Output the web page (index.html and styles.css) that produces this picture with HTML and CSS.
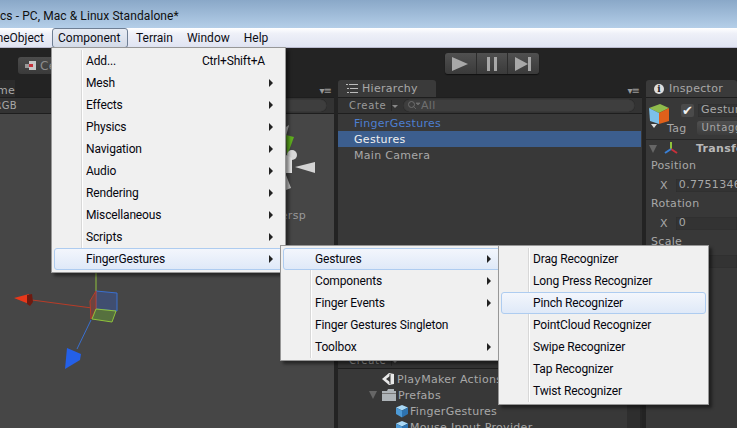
FILE: index.html

```html
<!DOCTYPE html>
<html lang="en">
<head>
  <meta charset="UTF-8" />
  <title>Unity - PC, Mac &amp; Linux Standalone</title>
  <link rel="stylesheet" href="styles.css">
</head>
<body>
  <svg class="defs" width="0" height="0">
    <symbol id="cube" viewBox="0 0 14 14">
      <polygon points="7,1 13,3.5 7,6.5 1,3.5" fill="#a9d8f5"/>
      <polygon points="1,3.5 7,6.5 7,13.5 1,10" fill="#4d9ad6"/>
      <polygon points="13,3.5 7,6.5 7,13.5 13,10" fill="#2d73b0"/>
    </symbol>
  </svg>

  <div class="titlebar">cs - PC, Mac &amp; Linux Standalone*</div>

  <div class="menubar">
    <div class="menu-clip"><span class="menubar-item">GameObject</span></div>
    <span class="menubar-item active">Component</span>
    <span class="menubar-item">Terrain</span>
    <span class="menubar-item">Window</span>
    <span class="menubar-item">Help</span>
  </div>

  <div class="editor">
    <div class="toolbar">
      <div class="pivot-btn">
        <svg width="12" height="10" viewBox="0 0 12 10"><rect x="0" y="3" width="4" height="4" fill="#999"/><rect x="4" y="0" width="7" height="9" fill="#c8c8c8"/><rect x="4" y="3" width="4" height="3" fill="#c8303a"/></svg>
        <span>Center</span>
      </div>
      <div class="play-group">
        <div class="play-btn"><svg width="18" height="16" viewBox="0 0 18 16"><polygon points="1,1 17,8 1,15" fill="#a8a8a8"/></svg></div>
        <div class="play-btn"><svg width="12" height="14" viewBox="0 0 12 14"><rect x="1" y="0" width="3" height="14" fill="#a8a8a8"/><rect x="8" y="0" width="3" height="14" fill="#a8a8a8"/></svg></div>
        <div class="play-btn"><svg width="18" height="16" viewBox="0 0 18 16"><polygon points="0,1 13,8 0,15" fill="#a8a8a8"/><rect x="13" y="1" width="3" height="14" fill="#a8a8a8"/></svg></div>
      </div>
    </div>

    <div class="panels">
      <div class="scene-panel">
        <div class="tabrow">
          <div class="clip-tab"><span>Game</span></div>
          <span class="panel-menu">▾≡</span>
        </div>
        <div class="subbar">
          <div class="clip-rgb"><span>RGB</span></div>
          <div class="search scene-search"></div>
        </div>
        <div class="scene-view">
          <svg class="gizmo" width="333" height="314" viewBox="0 114 333 314">
            <!-- handle at the origin -->
            <line x1="96" y1="273" x2="96" y2="291" stroke="#8fc23c"/>
            <line x1="32" y1="300" x2="92" y2="308" stroke="#b83c28"/>
            <line x1="91" y1="320" x2="77" y2="349" stroke="#3a70d0"/>
            <polygon points="96,291 117,293 117,311 96,309" fill="#404e70" stroke="#3a70d0"/>
            <polygon points="96,291 90,301 91,319 96,309" fill="#6e4440" stroke="#b83c28"/>
            <polygon points="96,309 116,311 112,322 92,319" fill="#56703e" stroke="#8fc23c"/>
            <polygon points="14,298 29,294 29,304" fill="#e8381a"/>
            <polygon points="27,295 32,294 33,302 30,306 27,304" fill="#6e1a10"/>
            <polygon points="67,348 81,354 80,360 65,369" fill="#2460e8"/>
            <!-- view cube -->
            <polygon points="286,135 294,137 287,156" fill="#5fae1e"/>
            <polygon points="286,127 289,125 286,136" fill="#bbb"/>
            <circle cx="292" cy="155" r="5" fill="#d8d8d8"/>
            <polygon points="286,155 292,158 292,173 286,173" fill="#e4e4e4"/>
            <polygon points="286,175 291,188 286,190" fill="#c8c8c8"/>
            <polygon points="295,167 315,162 315,173" fill="#d4d4d4"/>
          </svg>
          <span class="persp">Persp</span>
        </div>
      </div>

      <div class="center-col">
        <div class="hierarchy">
          <div class="tabrow">
            <div class="tab hier-tab">
              <svg width="12" height="9" viewBox="0 0 12 9"><path d="M0 .5h2M3 .5h9M1 4.5h2M4 4.5h8M1 8.5h2M4 8.5h8" stroke="#bbb"/></svg>
              <span>Hierarchy</span>
            </div>
            <span class="panel-menu">▾≡</span>
          </div>
          <div class="subbar">
            <span class="create">Create <i class="down"></i></span>
            <div class="search hier-search">
              <svg width="12" height="9" viewBox="0 0 12 9"><circle cx="3.5" cy="3.5" r="3" fill="none" stroke="#6e6e6e"/><path d="M5.5 5.5 8 8M8 2h4l-2 2z" stroke="#6e6e6e" fill="#6e6e6e" stroke-width=".8"/></svg>
              <span>All</span>
            </div>
          </div>
          <div class="hier-row prefab">FingerGestures</div>
          <div class="hier-row selected">Gestures</div>
          <div class="hier-row">Main Camera</div>
        </div>

        <div class="project">
          <div class="project-main">
            <div class="subbar"><span class="create">Create <i class="down"></i></span></div>
            <div class="proj-row depth1">
              <svg width="14" height="14" viewBox="0 0 14 14"><polygon points="1,7 8,1 13,2 13,12 8,13" fill="#e8e8e8"/><polygon points="5,7 9,4 9,10" fill="#383838"/><line x1="9" y1="2" x2="9" y2="12" stroke="#383838"/></svg>
              <span>PlayMaker Actions</span>
            </div>
            <div class="proj-row depth1">
              <i class="fold"></i>
              <svg width="14" height="12" viewBox="0 0 14 12"><path d="M0 2h5l1-2h6v2h2v10H0z" fill="#aeb4b8"/><rect x="0" y="4" width="14" height="1" fill="#777"/></svg>
              <span>Prefabs</span>
            </div>
            <div class="proj-row depth2"><svg width="14" height="14"><use href="#cube"/></svg><span>FingerGestures</span></div>
            <div class="proj-row depth2"><svg width="14" height="14"><use href="#cube"/></svg><span>Mouse Input Provider</span></div>
          </div>
          <div class="project-scroll"></div>
        </div>
      </div>

      <div class="inspector">
        <div class="tabrow">
          <div class="tab insp-tab"><i class="info">i</i><span>Inspector</span></div>
        </div>
        <div class="insp-head">
          <svg class="obj-icon" width="21" height="25" viewBox="0 0 21 25">
            <polygon points="0,4 11,0 20,4 10,9" fill="#8fbb4c"/>
            <polygon points="0,4 10,9 10,20 1,17" fill="#7cc0ea"/>
            <polygon points="10,9 20,4 20,17 10,20" fill="#e0601a"/>
            <polygon points="2,20 8,20 5,24" fill="#ddd"/>
          </svg>
          <div class="head-rows">
            <div class="head-row">
              <div class="check">✔</div>
              <div class="field name-field">Gestures</div>
            </div>
            <div class="head-row tag-row">
              <span class="tag-label">Tag</span>
              <div class="dropdown">Untagged</div>
            </div>
          </div>
        </div>
        <div class="transform-row">
          <i class="fold"></i>
          <svg width="14" height="14" viewBox="0 0 14 14"><line x1="7" y1="0" x2="7" y2="7" stroke="#8fc23c" stroke-width="2"/><line x1="7" y1="7" x2="13" y2="11" stroke="#c8303a" stroke-width="2"/><line x1="7" y1="7" x2="1" y2="11" stroke="#3a80d8" stroke-width="2"/></svg>
          <b>Transform</b>
        </div>
        <div class="prop-label">Position</div>
        <div class="prop-row"><span>X</span><div class="field">0.7751346</div></div>
        <div class="prop-label">Rotation</div>
        <div class="prop-row"><span>X</span><div class="field">0</div></div>
        <div class="prop-label">Scale</div>
        <div class="prop-row"><span>X</span><div class="field">1</div></div>
      </div>
    </div>
  </div>

  <div class="menu menu-component">
    <div class="menu-item"><span>Add...</span><span class="shortcut">Ctrl+Shift+A</span></div>
    <div class="menu-item sub">Mesh</div>
    <div class="menu-item sub">Effects</div>
    <div class="menu-item sub">Physics</div>
    <div class="menu-item sub">Navigation</div>
    <div class="menu-item sub">Audio</div>
    <div class="menu-item sub">Rendering</div>
    <div class="menu-item sub">Miscellaneous</div>
    <div class="menu-item sub">Scripts</div>
    <div class="menu-item sub hover">FingerGestures</div>
  </div>

  <div class="menu menu-finger">
    <div class="menu-item sub hover">Gestures</div>
    <div class="menu-item sub">Components</div>
    <div class="menu-item sub">Finger Events</div>
    <div class="menu-item">Finger Gestures Singleton</div>
    <div class="menu-item sub">Toolbox</div>
  </div>

  <div class="menu menu-gestures">
    <div class="menu-item">Drag Recognizer</div>
    <div class="menu-item">Long Press Recognizer</div>
    <div class="menu-item hover">Pinch Recognizer</div>
    <div class="menu-item">PointCloud Recognizer</div>
    <div class="menu-item">Swipe Recognizer</div>
    <div class="menu-item">Tap Recognizer</div>
    <div class="menu-item">Twist Recognizer</div>
  </div>
</body>
</html>
```

FILE: styles.css

```css
* {
  box-sizing: border-box;
}

html, body {
  margin: 0;
  height: 428px;
  overflow: hidden;
}

body {
  display: flex;
  flex-direction: column;
  font-family: Roboto, sans-serif;
  font-size: 12px;
  position: relative;
}

svg {
  flex: none;
}

.defs {
  position: absolute;
}

.titlebar {
  height: 28px;
  flex: none;
  line-height: 32px;
  letter-spacing: 0.08px;
  color: #101010;
  white-space: nowrap;
  background: linear-gradient(#8aa8c8, #b4cee8);
}

.menubar {
  height: 20px;
  flex: none;
  display: flex;
  gap: 2px;
  align-items: center;
  color: #0c0c14;
  border-bottom: 1px solid #b9b9cd;
  background: linear-gradient(#fff, #eef0f8 30%, #e0e4f2);
}

.menu-clip {
  width: 50px;
  display: flex;
  justify-content: flex-end;
  overflow: hidden;
}

.menubar-item {
  padding: 0 5px;
  line-height: 18px;
  white-space: nowrap;
  border: 1px solid transparent;
  flex: none;
}

.menubar-item.active {
  width: 76px;
  border: 1px solid #6f7f94;
  border-radius: 3px;
  background: linear-gradient(#e8ecf4, #d4dbe8);
}

.editor {
  flex: 1;
  display: flex;
  flex-direction: column;
  background: #232323;
  font-family: 'DejaVu Sans', sans-serif;
  font-size: 11px;
  letter-spacing: 0.3px;
  color: #a8a8a8;
  min-height: 0;
}

.toolbar {
  height: 32px;
  flex: none;
  padding: 5px 0 0 18px;
  display: flex;
  align-items: flex-start;
}

.pivot-btn {
  width: 60px;
  height: 17px;
  margin-top: 4px;
  padding-left: 7px;
  display: flex;
  align-items: center;
  gap: 3px;
  font-size: 12px;
  color: #8c8c8c;
  border-radius: 3px;
  background: linear-gradient(#4c4c4c, #3a3a3a);
}

.play-group {
  margin-left: 367px;
  width: 94px;
  height: 21px;
  display: flex;
  border-radius: 3px;
  background: linear-gradient(#505050, #3a3a3a);
  box-shadow: 0 1px 1px #111;
}

.play-btn {
  flex: 1;
  display: flex;
  align-items: center;
  justify-content: center;
  border-left: 1px solid #2c2c2c;
}

.play-btn:first-child {
  border-left: none;
}

.panels {
  flex: 1;
  display: flex;
  min-height: 0;
}

.tabrow {
  height: 17px;
  flex: none;
  display: flex;
  align-items: stretch;
  justify-content: space-between;
  position: relative;
}

.panel-menu {
  font-size: 10px;
  letter-spacing: -1px;
  line-height: 22px;
  padding-right: 3px;
  color: #9a9a9a;
}

.subbar {
  height: 17px;
  flex: none;
  display: flex;
  align-items: center;
  background: #333;
  border-top: 1px solid #1e1e1e;
  border-bottom: 1px solid #1e1e1e;
}

.search {
  height: 13px;
  border-radius: 7px;
  background: #3e3e3e;
  box-shadow: inset 0 0 1px #111;
}

.tab {
  display: flex;
  align-items: center;
  gap: 4px;
  border-radius: 3px 3px 0 0;
  background: #3a3a3a;
}

/* scene */
.scene-panel {
  width: 334px;
  flex: none;
  display: flex;
  flex-direction: column;
}

.clip-tab {
  width: 15px;
  display: flex;
  justify-content: flex-end;
  overflow: hidden;
  line-height: 22px;
  background: #2b2b2b;
}

.clip-rgb {
  width: 17px;
  display: flex;
  justify-content: flex-end;
  overflow: hidden;
  font-size: 10px;
}

.scene-search {
  margin-left: 260px;
  width: 50px;
}

.scene-view {
  flex: 1;
  position: relative;
  background: #464646;
}

.gizmo {
  position: absolute;
  left: 0;
  top: 0;
}

.persp {
  position: absolute;
  right: 28px;
  top: 95px;
  color: #9a9a9a;
}

/* hierarchy + project */
.center-col {
  width: 304px;
  flex: none;
  margin-left: 4px;
  display: flex;
  flex-direction: column;
  gap: 5px;
}

.hierarchy {
  flex: 1;
  display: flex;
  flex-direction: column;
  background: #383838;
}

.hierarchy .tabrow {
  background: #232323;
}

.hier-tab {
  width: 98px;
  padding-left: 8px;
  line-height: 17px;
}

.create {
  padding-left: 11px;
  width: 54px;
  flex: none;
  white-space: nowrap;
  color: #9a9a9a;
  font-size: 10px;
  letter-spacing: 0.7px;
  border-right: 1px solid #262626;
}

.down {
  display: inline-block;
  margin-left: 2px;
  vertical-align: 1px;
  border-left: 3px solid transparent;
  border-right: 3px solid transparent;
  border-top: 3px solid #888;
}

.hier-search {
  margin-left: 11px;
  width: 232px;
  padding-left: 5px;
  display: flex;
  align-items: center;
  gap: 1px;
  line-height: 13px;
  color: #707070;
}

.hier-row {
  height: 16px;
  line-height: 16px;
  padding: 1px 0 0 16px;
  margin-right: 1px;
}

.hierarchy .subbar + .hier-row {
  margin-top: 1px;
}

.hier-row.prefab {
  color: #4d7fd1;
}

.hier-row.selected {
  color: #f0f0f0;
  background: #3c5e8e;
}

.project {
  height: 76px;
  flex: none;
  display: flex;
}

.project-main {
  flex: 1;
  background: #383838;
}

.project-scroll {
  width: 15px;
  background: #2e2e2e;
  border-right: 2px solid #262626;
}

.proj-row {
  height: 16px;
  display: flex;
  align-items: center;
  gap: 2px;
  white-space: nowrap;
}

.project-main .subbar + .proj-row {
  margin-top: 2px;
}

.proj-row.depth1 {
  padding-left: 43px;
}

.proj-row.depth2 {
  padding-left: 57px;
  gap: 1px;
}

.proj-row .fold {
  margin-left: -12px;
  margin-right: 3px;
}

.fold {
  display: block;
  flex: none;
  border-left: 4px solid transparent;
  border-right: 4px solid transparent;
  border-top: 8px solid #666;
}

/* inspector */
.inspector {
  flex: 1;
  margin-left: 4px;
  min-width: 0;
  overflow: hidden;
  background: #383838;
}

.inspector .tabrow {
  background: #232323;
}

.insp-tab {
  flex: 1;
  padding-left: 8px;
  gap: 5px;
}

.info {
  width: 10px;
  height: 10px;
  flex: none;
  border-radius: 50%;
  background: #ddd;
  color: #222;
  font: bold 9px/10px 'DejaVu Serif', serif;
  text-align: center;
}

.insp-head {
  height: 43px;
  padding: 6px 0 0 3px;
  display: flex;
  border-top: 1px solid #1e1e1e;
  border-bottom: 1px solid #262626;
}

.obj-icon {
  flex: none;
}

.head-rows {
  margin-left: 11px;
}

.head-row {
  display: flex;
  align-items: center;
  gap: 4px;
  white-space: nowrap;
}

.check {
  width: 13px;
  height: 13px;
  flex: none;
  font-size: 13px;
  line-height: 13px;
  letter-spacing: 0;
  text-align: center;
  color: #f2f2f2;
  background: #4a4a4a;
  border-radius: 2px;
}

.name-field {
  height: 15px;
  line-height: 14px;
  padding-left: 3px;
}

.tag-row {
  margin-top: 4px;
  margin-left: -14px;
  gap: 10px;
}

.dropdown {
  height: 14px;
  line-height: 13px;
  padding-left: 5px;
  font-size: 10px;
  letter-spacing: 0.7px;
  border-radius: 3px;
  background: linear-gradient(#505050, #3c3c3c);
}

.transform-row {
  height: 17px;
  padding-left: 3px;
  display: flex;
  align-items: center;
  white-space: nowrap;
  gap: 7px;
}

.transform-row b {
  margin-left: 11px;
  color: #b8b8b8;
}

.prop-label {
  height: 18px;
  line-height: 18px;
  padding-left: 5px;
}

.prop-row {
  height: 20px;
  padding-left: 14px;
  display: flex;
  align-items: center;
  gap: 8px;
  white-space: nowrap;
}

.field {
  flex: 1;
  height: 13px;
  padding-left: 3px;
  line-height: 12px;
  background: #333;
  box-shadow: inset 0 0 1px #1c1c1c;
}

/* dropdown menus */
.menu {
  position: absolute;
  padding: 2px;
  background: #f0f0f0;
  border: 1px solid #979797;
  box-shadow: 3px 3px 3px rgba(0, 0, 0, 0.45);
  color: #06060f;
  font-family: Roboto, sans-serif;
  font-size: 12px;
  letter-spacing: -0.15px;
}

.menu::before {
  content: "";
  position: absolute;
  left: 29px;
  top: 2px;
  bottom: 2px;
  width: 1px;
  background: #d8d8d8;
  box-shadow: 1px 0 0 #fff;
}

.menu-component {
  left: 51px;
  top: 47px;
  width: 235px;
}

.menu-finger {
  left: 280px;
  top: 245px;
  width: 224px;
}

.menu-gestures {
  left: 498px;
  top: 245px;
  width: 211px;
}

.menu-item {
  height: 22px;
  line-height: 20px;
  padding: 0 9px 0 31px;
  display: flex;
  justify-content: space-between;
  align-items: center;
  white-space: nowrap;
  border: 1px solid transparent;
  position: relative;
}

.menu-item.sub::after {
  content: "";
  border-left: 4px solid #222;
  border-top: 4px solid transparent;
  border-bottom: 4px solid transparent;
  margin-left: auto;
}

.menu-item.hover {
  border: 1px solid #aeccf0;
  border-radius: 3px;
  background: linear-gradient(#f3f6fc, #dfe9f8);
}

.shortcut {
  margin-right: 8px;
}
```
